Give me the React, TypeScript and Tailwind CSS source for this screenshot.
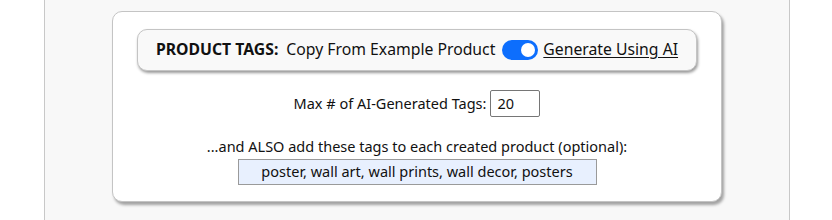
export default function App() {
  return (
    <div className="w-[832px] h-[220px] bg-white overflow-hidden" style={{ fontFamily: '"Noto Sans", "Open Sans", sans-serif' }}>
      <div className="ml-[44px] w-[746px] h-[220px] bg-[#f8f8f8] border-x border-[#c8c8c8] pt-[11px]">
        <div className="ml-[67px] w-[610px] h-[191px] bg-white border border-[#c4c4c4] rounded-[10px] shadow-[2px_3px_3px_rgba(0,0,0,0.35)] pt-[17px] px-[24px] flex flex-col items-center text-[14.5px] text-[#111]">
          <div className="w-full h-[42px] bg-[#f9f9f9] border border-[#c4c4c4] rounded-[10px] shadow-[1px_2px_3px_rgba(0,0,0,0.4)] flex items-center justify-center text-[15.75px]">
            <span className="font-bold mr-[8px]">PRODUCT TAGS:</span>
            <span>Copy From Example Product</span>
            <span className="ml-[7px] mr-[5px] w-[36px] h-[20px] rounded-full bg-[#0d6efd] flex items-center justify-end pr-[3px]">
              <span className="w-[14px] h-[14px] rounded-full bg-white"></span>
            </span>
            <span className="underline underline-offset-2">Generate Using AI</span>
          </div>
          <div className="mt-[19px] flex items-center h-[27px]">
            <span>Max # of AI-Generated Tags:</span>
            <span className="ml-[4px] w-[50px] h-[27px] border border-[#767676] rounded-[2px] flex items-center pl-[6px]">20</span>
          </div>
          <div className="mt-[18px] leading-[22px]">...and ALSO add these tags to each created product (optional):</div>
          <div className="mt-[2px] w-[359px] h-[26px] bg-[#e8f0fe] border border-[#9a9a9a] flex items-center justify-center">
            poster, wall art, wall prints, wall decor, posters
          </div>
        </div>
      </div>
    </div>
  );
}
